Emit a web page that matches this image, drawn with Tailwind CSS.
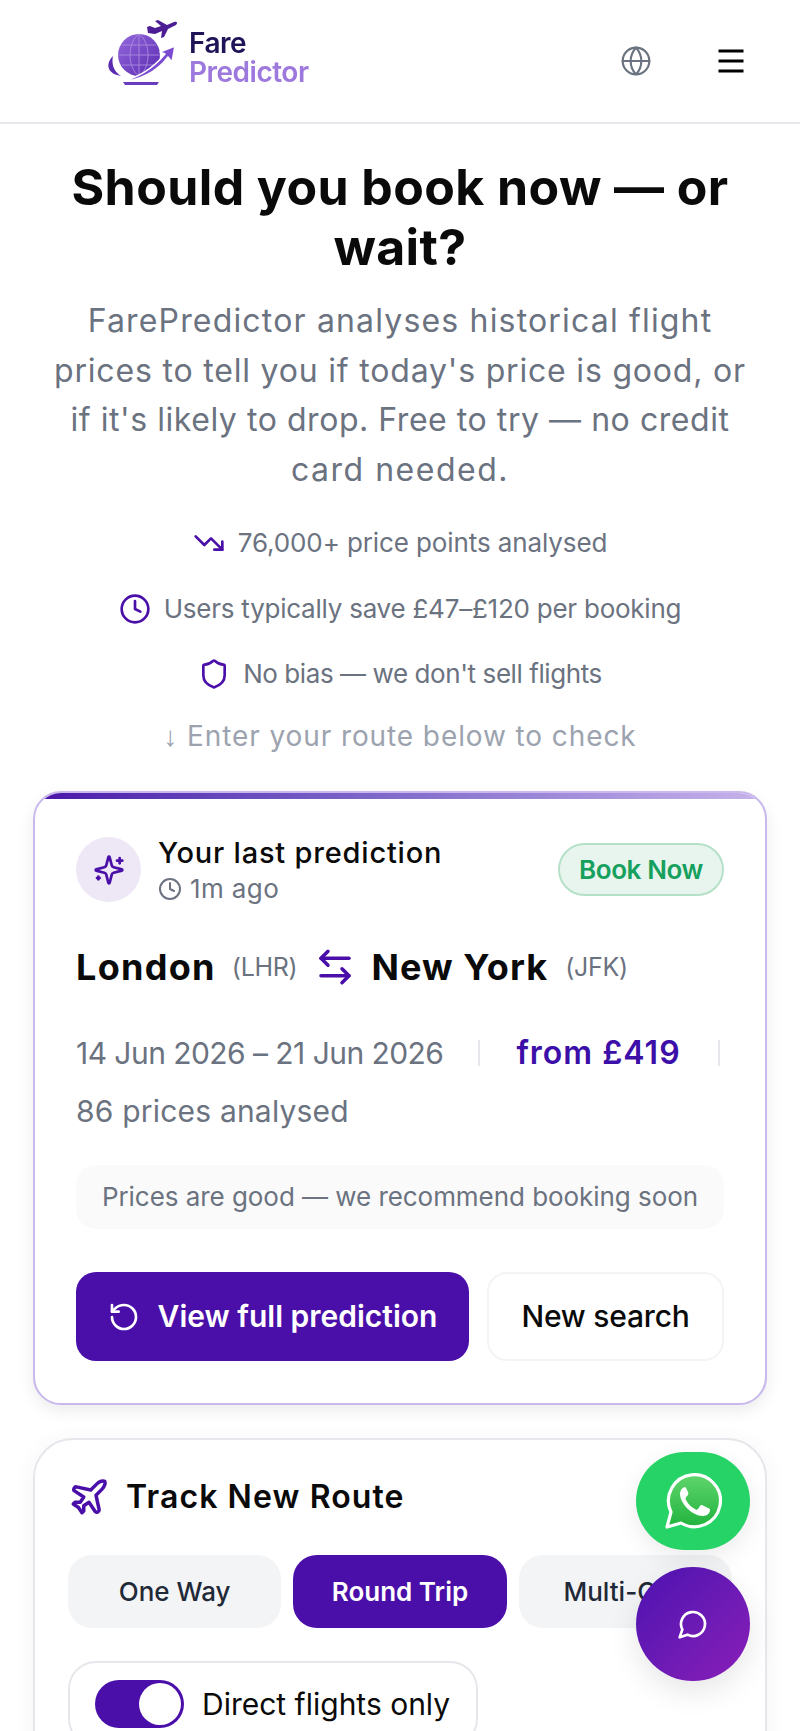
<!DOCTYPE html>
<html lang="en">
<head>
<meta charset="utf-8">
<title>FarePredictor</title>
<script src="https://cdn.jsdelivr.net/npm/@tailwindcss/browser@4"></script>
</head>
<body class="bg-white">
<div class="relative w-[800px] h-[1731px] overflow-hidden bg-white font-['Inter','Noto_Sans',sans-serif] text-[#0a0a0a]">
  <header class="h-[124px] border-b-2 border-[#e5e7eb] flex items-start justify-between pl-[105px] pr-[53px]">
    <div class="mt-[18px] flex items-center h-[72px] blur-[0.5px]">
      <svg class="w-[80px] h-[72px]" viewBox="0 0 80 72">
        <defs><linearGradient id="g" x1="0" y1="0" x2="1" y2="1"><stop offset="0" stop-color="#9468dc"/><stop offset="1" stop-color="#5a2ab0"/></linearGradient></defs>
        <circle cx="34" cy="37" r="21" fill="url(#g)"/>
        <path d="M34 16v42M13 37h42M17 27h34M17 47h34M34 16c-12 8-12 34 0 42M34 16c12 8 12 34 0 42" stroke="#a98be0" stroke-width="0.9" fill="none"/>
        <path d="M8 38C0 46 2 56 16 58 10 54 6 48 8 38z" fill="#5a2bb0"/>
        <path d="M14 64C34 60 50 48 60 36l-5-2 15-6-3 16-4-5C52 54 34 63 14 64z" fill="#7a4bd0" stroke="#fff" stroke-width="1.5" stroke-linejoin="round"/>
        <path d="M18 64h36l-2 3H20z" fill="#6a3cc0"/>
        <path d="M42 9l3-1 5 2 6-2-6-5 3-1 9 5 7-3c3-1 4 1 2 3l-8 4-4 8-3 1 1-7-7 3-7-1z" fill="#4c1d95"/>
      </svg>
      <div class="ml-[4px] mt-[7px] flex flex-col text-[28px] leading-[29px] font-semibold tracking-[-0.5px]">
        <span class="text-[#1e1457]">Fare</span>
        <span class="text-[#9d78dd]">Predictor</span>
      </div>
    </div>
    <div class="mt-[45px] flex items-center gap-[63px]">
      <svg class="w-[32px] h-[32px] text-[#6b7280]" viewBox="0 0 24 24" fill="none" stroke="currentColor" stroke-width="1.6" stroke-linecap="round" stroke-linejoin="round"><circle cx="12" cy="12" r="10"/><path d="M12 2a14.5 14.5 0 0 0 0 20 14.5 14.5 0 0 0 0-20"/><path d="M2 12h20"/></svg>
      <svg class="w-[32px] h-[32px] text-black" viewBox="0 0 32 32" fill="none" stroke="currentColor" stroke-width="3"><path d="M3.5 6h25M3.5 16h25M3.5 26h25"/></svg>
    </div>
  </header>

  <main class="px-[33px]">
    <h1 class="pt-[33px] text-center text-[50px] leading-[60px] font-bold tracking-[0.4px]">Should you book now — or wait?</h1>
    <p class="mt-[19px] text-center text-[32px] leading-[49.6px] text-[#6b7280]">
      <span class="block tracking-[1.17px]">FarePredictor analyses historical flight</span>
      <span class="block tracking-[0.81px]">prices to tell you if today's price is good, or</span>
      <span class="block tracking-[0.55px]">if it's likely to drop. Free to try — no credit</span>
      <span class="block tracking-[1.5px]">card needed.</span>
    </p>

    <ul class="mt-[31px] flex flex-col gap-[29.5px] text-[26px] leading-[36px] text-[#6b7280]">
      <li class="flex items-center justify-center gap-[13px]">
        <svg class="w-[32px] h-[32px] text-[#4a0fa8]" viewBox="0 0 24 24" fill="none" stroke="currentColor" stroke-width="2" stroke-linecap="round" stroke-linejoin="round"><polyline points="22 17 13.5 8.5 8.5 13.5 2 7"/><polyline points="16 17 22 17 22 11"/></svg>
        <span class="tracking-[-0.11px]">76,000+ price points analysed</span>
      </li>
      <li class="flex items-center justify-center gap-[13px]">
        <svg class="w-[32px] h-[32px] text-[#4a0fa8]" viewBox="0 0 24 24" fill="none" stroke="currentColor" stroke-width="2" stroke-linecap="round" stroke-linejoin="round"><circle cx="12" cy="12" r="10"/><polyline points="12 6 12 12 16 14"/></svg>
        <span class="tracking-[-0.24px]">Users typically save £47–£120 per booking</span>
      </li>
      <li class="flex items-center justify-center gap-[13px]">
        <svg class="w-[32px] h-[32px] text-[#4a0fa8]" viewBox="0 0 24 24" fill="none" stroke="currentColor" stroke-width="2" stroke-linecap="round" stroke-linejoin="round"><path d="M20 13c0 5-3.5 7.5-7.66 8.95a1 1 0 0 1-.67-.01C7.5 20.5 4 18 4 13V6a1 1 0 0 1 1-1c2 0 4.5-1.2 6.24-2.72a1.17 1.17 0 0 1 1.52 0C14.51 3.81 17 5 19 5a1 1 0 0 1 1 1z"/></svg>
        <span class="tracking-[-0.42px]">No bias — we don't sell flights</span>
      </li>
    </ul>
    <p class="mt-[24px] text-center text-[28px] leading-[40px] tracking-[0.9px] text-[#9ca3af]"><span class="font-['Liberation_Sans']">↓</span> Enter your route below to check</p>

    <section class="relative mt-[34px] h-[614px] rounded-[28px] border-2 border-[#c9b8ec] bg-white px-[41px] pt-[44px] shadow-[0_6px_16px_rgba(0,0,0,0.08)] overflow-hidden">
      <div class="absolute left-[-2px] right-[-2px] top-[-2px] h-[8px] bg-gradient-to-r from-[#4a0fa8] to-[#c8b4ea]"></div>
      <div class="flex items-center justify-between h-[65px]">
        <div class="flex items-center gap-[17px]">
          <div class="w-[65px] h-[65px] rounded-full bg-[#ede7f6] flex items-center justify-center">
            <svg class="w-[32px] h-[32px] text-[#4a0fa8]" viewBox="0 0 24 24" fill="none" stroke="currentColor" stroke-width="2" stroke-linecap="round" stroke-linejoin="round"><path d="M9.937 15.5A2 2 0 0 0 8.5 14.063l-6.135-1.582a.5.5 0 0 1 0-.962L8.5 9.936A2 2 0 0 0 9.937 8.5l1.582-6.135a.5.5 0 0 1 .963 0L14.063 8.5A2 2 0 0 0 15.5 9.937l6.135 1.581a.5.5 0 0 1 0 .964L15.5 14.063a2 2 0 0 0-1.437 1.437l-1.582 6.135a.5.5 0 0 1-.963 0z"/><path d="M20 3v4"/><path d="M22 5h-4"/><path d="M4 17v2"/><path d="M5 18H3"/></svg>
          </div>
          <div class="flex flex-col mt-[2px]">
            <span class="text-[29px] leading-[36px] font-medium tracking-[0.8px]">Your last prediction</span>
            <span class="flex items-center gap-[8px] text-[26px] leading-[36px] tracking-[0.4px] text-[#6b7280]">
              <svg class="w-[24px] h-[24px]" viewBox="0 0 24 24" fill="none" stroke="currentColor" stroke-width="2" stroke-linecap="round" stroke-linejoin="round"><circle cx="12" cy="12" r="10"/><polyline points="12 6 12 12 16 14"/></svg>
              1m ago
            </span>
          </div>
        </div>
        <span class="flex items-center justify-center w-[166px] h-[53px] rounded-full bg-[#e8f5ee] border-2 border-[#b5e0c8] text-[26px] font-semibold tracking-[-0.4px] text-[#16a05d]">Book Now</span>
      </div>

      <div class="mt-[40px] flex items-center h-[50px]">
        <span class="text-[36px] font-bold tracking-[1.3px]">London</span>
        <span class="ml-[16px] text-[25px] tracking-[-0.3px] text-[#6b7280]">(LHR)</span>
        <svg class="ml-[17px] w-[42px] h-[42px] text-[#4a0fa8]" viewBox="0 0 24 24" fill="none" stroke="currentColor" stroke-width="2" stroke-linecap="round" stroke-linejoin="round"><path d="M8 3 4 7l4 4"/><path d="M4 7h16"/><path d="m16 21 4-4-4-4"/><path d="M20 17H4"/></svg>
        <span class="ml-[15px] text-[36px] font-bold tracking-[1.1px]">New York</span>
        <span class="ml-[17px] text-[25px] tracking-[-0.3px] text-[#6b7280]">(JFK)</span>
      </div>

      <div class="mt-[32px] flex flex-wrap items-center gap-x-[35px] text-[30px] leading-[58px] text-[#6b7280]">
        <span class="tracking-[-0.55px]">14 Jun 2026 – 21 Jun 2026</span>
        <span class="w-[2px] h-[26px] bg-[#e5e7eb]"></span>
        <span class="ml-[1px] text-[32px] font-semibold tracking-[1px] text-[#3c0fa8]">from £419</span>
        <span class="ml-[2px] w-[2px] h-[26px] bg-[#e5e7eb]"></span>
        <span class="w-full tracking-[0.2px]">86 prices analysed</span>
      </div>

      <div class="mt-[25px] h-[64px] rounded-[20px] bg-[#fafafa] flex items-center justify-center text-[26px] tracking-[-0.05px] text-[#6b7280]"><span class="-mt-[2px]">Prices are good — we recommend booking soon</span></div>

      <div class="mt-[43px] flex gap-[18px] h-[89px]">
        <button class="w-[393px] rounded-[20px] bg-[#4a0fa8] text-white text-[30px] font-semibold flex items-center justify-center gap-[18px]">
          <svg class="w-[32px] h-[32px]" viewBox="0 0 24 24" fill="none" stroke="currentColor" stroke-width="2" stroke-linecap="round" stroke-linejoin="round"><path d="M3 12a9 9 0 1 0 9-9 9.75 9.75 0 0 0-6.74 2.74L3 8"/><path d="M3 3v5h5"/></svg>
          View full prediction
        </button>
        <button class="flex-1 rounded-[20px] border-2 border-[#f3f4f6] bg-white text-[30px] font-medium tracking-[-0.2px]">New search</button>
      </div>
    </section>

    <section class="mt-[33px] h-[400px] rounded-[40px] border-2 border-[#e5e7eb] bg-white px-[33px] pt-[33px] shadow-[0_4px_24px_rgba(0,0,0,0.05)]">
      <div class="flex items-center gap-[16px] h-[48px]">
        <svg class="w-[42px] h-[42px] text-[#4a0fa8]" viewBox="0 0 24 24" fill="none" stroke="currentColor" stroke-width="2" stroke-linecap="round" stroke-linejoin="round"><path d="M17.8 19.2 16 11l3.5-3.5C21 6 21.5 4 21 3c-1-.5-3 0-4.5 1.5L13 8 4.8 6.2c-.5-.1-.9.1-1.1.5l-.3.5c-.2.5-.1 1 .3 1.3L9 12l-2 3H4l-1 1 3 2 2 3 1-1v-3l3-2 3.5 5.3c.3.4.8.5 1.3.3l.5-.2c.4-.3.6-.7.5-1.2z"/></svg>
        <h2 class="text-[32px] font-semibold tracking-[1.1px]">Track New Route</h2>
      </div>
      <div class="mt-[34px] grid grid-cols-3 gap-[12px] h-[73px] text-[26px] font-medium">
        <button class="rounded-[24px] bg-[#f3f4f6] text-[#1f2937]">One Way</button>
        <button class="rounded-[24px] bg-[#4a0fa8] text-white font-semibold">Round Trip</button>
        <button class="rounded-[24px] bg-[#f3f4f6] text-[#1f2937]">Multi-City</button>
      </div>
      <div class="mt-[33px] w-[410px] h-[86px] rounded-[28px] border-2 border-[#e5e7eb] flex items-center pl-[25px] gap-[18px]">
        <span class="relative w-[89px] h-[48px] rounded-full bg-[#4a0fa8]"><span class="absolute right-[3px] top-[3px] w-[42px] h-[42px] rounded-full bg-white"></span></span>
        <span class="text-[30px]">Direct flights only</span>
      </div>
    </section>
  </main>

  <a class="absolute left-[636px] top-[1452px] w-[114px] h-[98px] rounded-full bg-[#25d366] shadow-[0_8px_24px_rgba(0,0,0,0.08)] flex items-center justify-center">
    <svg class="w-[58px] h-[58px]" viewBox="0 0 58 58">
      <defs><linearGradient id="w" x1="0" y1="0" x2="0" y2="1"><stop offset="0" stop-color="#5fd56b"/><stop offset="1" stop-color="#22b33f"/></linearGradient></defs>
      <path d="M3 55l4-15A26 26 0 1 1 17 51z" fill="url(#w)" stroke="#fff" stroke-width="3.2" stroke-linejoin="round"/>
      <path d="M21 15c-2 0-5 3-5 7 0 9 12 22 23 22 4 0 7-3 7-6 0-1-1-2-2-2l-6-3c-1 0-2 0-2 1l-2 3c-1 1-2 1-3 0-4-2-7-5-9-9-1-1 0-2 0-3l2-2c.5-1 .5-2 0-3l-2-4c-.5-1-1-1-1-1z" fill="#fff"/>
    </svg>
  </a>
  <a class="absolute left-[636px] top-[1567px] w-[114px] h-[114px] rounded-full bg-gradient-to-br from-[#4c0fb0] to-[#8a1cb8] shadow-[0_10px_30px_rgba(0,0,0,0.1)] flex items-center justify-center">
    <svg class="w-[32px] h-[32px] text-white" viewBox="0 0 24 24" fill="none" stroke="currentColor" stroke-width="2" stroke-linecap="round" stroke-linejoin="round"><path d="M7.9 20A9 9 0 1 0 4 16.1L2 22Z"/></svg>
  </a>
</div>
</body>
</html>
